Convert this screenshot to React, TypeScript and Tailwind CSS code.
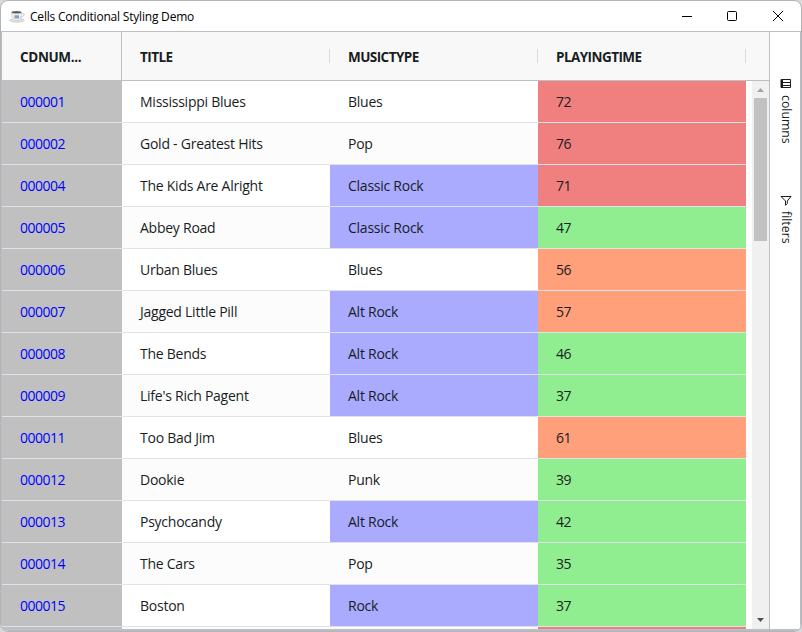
import React from "react";

type Row = { id: string; title: string; type: string; time: number };

const rows: Row[] = [
  { id: "000001", title: "Mississippi Blues", type: "Blues", time: 72 },
  { id: "000002", title: "Gold - Greatest Hits", type: "Pop", time: 76 },
  { id: "000004", title: "The Kids Are Alright", type: "Classic Rock", time: 71 },
  { id: "000005", title: "Abbey Road", type: "Classic Rock", time: 47 },
  { id: "000006", title: "Urban Blues", type: "Blues", time: 56 },
  { id: "000007", title: "Jagged Little Pill", type: "Alt Rock", time: 57 },
  { id: "000008", title: "The Bends", type: "Alt Rock", time: 46 },
  { id: "000009", title: "Life's Rich Pagent", type: "Alt Rock", time: 37 },
  { id: "000011", title: "Too Bad Jim", type: "Blues", time: 61 },
  { id: "000012", title: "Dookie", type: "Punk", time: 39 },
  { id: "000013", title: "Psychocandy", type: "Alt Rock", time: 42 },
  { id: "000014", title: "The Cars", type: "Pop", time: 35 },
  { id: "000015", title: "Boston", type: "Rock", time: 37 },
];

const timeColor = (t: number) =>
  t > 70 ? "bg-[#f08080]" : t > 50 ? "bg-[#ffa07a]" : "bg-[#90ee90]";

function CoffeeIcon() {
  return (
    <svg width="16" height="16" viewBox="0 0 16 16">
      <ellipse cx="8" cy="12.300" rx="7.300" ry="1.900" fill="#e2e2e2" stroke="#b5b5b5" strokeWidth=".5" />
      <path d="M2.500 4.500h10c0 4.500-1.500 8-5 8s-5-3.500-5-8z" fill="#f1f1f1" stroke="#b5b5b5" strokeWidth=".5" />
      <path d="M12.300 5.800c2.800-.7 3.400.8 2.300 2-.6.8-1.700 1.300-2.800 1.400" fill="none" stroke="#c0c0c0" />
      <ellipse cx="7.500" cy="4.300" rx="5" ry="1.300" fill="#5a524d" stroke="#c4c4c4" strokeWidth=".5" />
      <path d="M5.500 7.300h4.500v3.200h-4.500z" fill="#7ba3bf" />
    </svg>
  );
}

function HeaderCell({ label }: { label: string }) {
  return (
    <div className="flex w-[208px] items-center justify-between pl-[18px]">
      <span className="mt-[3px]">{label}</span>
      <span className="h-[14px] w-px bg-[#dcdde0]" />
    </div>
  );
}

export default function App() {
  return (
    <div className="h-[632px] w-[802px] overflow-hidden bg-[#d9d9dc] font-['Open_Sans','Noto_Sans',sans-serif] text-[#181d1f]">
      <div className="flex h-[632px] w-[802px] flex-col overflow-hidden rounded-[8px] border border-[#b4b4b6] bg-white">
        <div className="flex h-[30px] shrink-0 items-center pl-2 text-black">
          <CoffeeIcon />
          <span className="ml-[5px] mt-px text-[12px] tracking-[-0.2px]">Cells Conditional Styling Demo</span>
          <svg className="ml-auto mr-[17px] mt-[-1px]" width="102" height="12" viewBox="0 0 102 12" fill="none" stroke="#000">
            <path d="M0 6.500h10" />
            <rect x="45.500" y="1.500" width="9" height="9" rx="1" />
            <path d="M91 1l10 10M101 1L91 11" />
          </svg>
        </div>
        <div className="flex min-h-0 flex-1 border border-b-2 border-[#babfc7]">
          <div className="flex w-[767px] flex-col overflow-hidden">
            <div className="flex h-[49px] shrink-0 border-b border-[#babfc7] bg-[#f8f8f8] text-[13.500px] font-bold tracking-[-0.560px]">
              <div className="flex w-[120px] items-center border-r border-[#babfc7] pl-[18px] pt-[3px] tracking-[-0.350px]">CDNUM...</div>
              <HeaderCell label="TITLE" />
              <HeaderCell label="MUSICTYPE" />
              <HeaderCell label="PLAYINGTIME" />
            </div>
            <div className="flex min-h-0 flex-1">
              <div className="flex w-[744px] flex-col overflow-hidden text-[14px] tracking-[-0.250px]">
                {rows.map((r, i) => (
                  <div key={r.id} className={`flex h-[42px] shrink-0 border-b border-[#dde2eb] leading-[42px] ${i % 2 ? "bg-[#fcfcfc]" : "bg-white"}`}>
                    <div className="h-[41px] w-[120px] bg-[#c0c0c0] pl-[18px] tracking-[-0.500px] text-[#0000ff]">{r.id}</div>
                    <div className="h-[41px] w-[208px] pl-[18px]">{r.title}</div>
                    <div className={`h-[41px] w-[208px] pl-[18px] ${r.type.includes("Rock") ? "bg-[#aaaaff]" : ""}`}>{r.type}</div>
                    <div className={`h-[41px] w-[208px] pl-[18px] tracking-[-0.500px] ${timeColor(r.time)}`}>{r.time}</div>
                  </div>
                ))}
                <div className="flex h-[42px] shrink-0">
                  <div className="w-[120px] bg-[#c0c0c0]" />
                  <div className="w-[416px] bg-[#fcfcfc]" />
                  <div className="w-[208px] bg-[#f08080]" />
                </div>
              </div>
              <div className="ml-[6px] flex w-[17px] flex-col items-center justify-between bg-[#f0f0f0]">
                <div className="flex flex-col items-center">
                  <svg width="17" height="17"><path d="M5 11h7L8.500 7z" fill="#a3a3a3" /></svg>
                  <div className="h-[143px] w-[13px] bg-[#c1c1c1]" />
                </div>
                <svg width="17" height="17"><path d="M5 6h7L8.500 10z" fill="#505050" /></svg>
              </div>
            </div>
          </div>
          <div className="flex w-[31px] flex-col items-center border-l border-[#babfc7] pl-[2px] pt-[46px] text-[12.300px]">
            <div className="flex h-[67px] flex-col items-center">
              <svg width="12" height="12" viewBox="0 0 12 12" fill="none" stroke="#181d1f"><path d="M1 1.500h9.500v8H1zM1 4.500h9M1 7.500h9" /><path d="M2 1v9" strokeWidth="2" /></svg>
              <span className="mt-[5px] [writing-mode:vertical-rl]">columns</span>
            </div>
            <div className="mt-[50px] flex flex-col items-center">
              <svg width="12" height="12" viewBox="0 0 12 12" fill="none" stroke="#181d1f"><path d="M1 1.500h10L7.300 6v2.500L5.500 10.300V6z" /></svg>
              <span className="mt-[4px] [writing-mode:vertical-rl]">filters</span>
            </div>
          </div>
        </div>
      </div>
    </div>
  );
}
